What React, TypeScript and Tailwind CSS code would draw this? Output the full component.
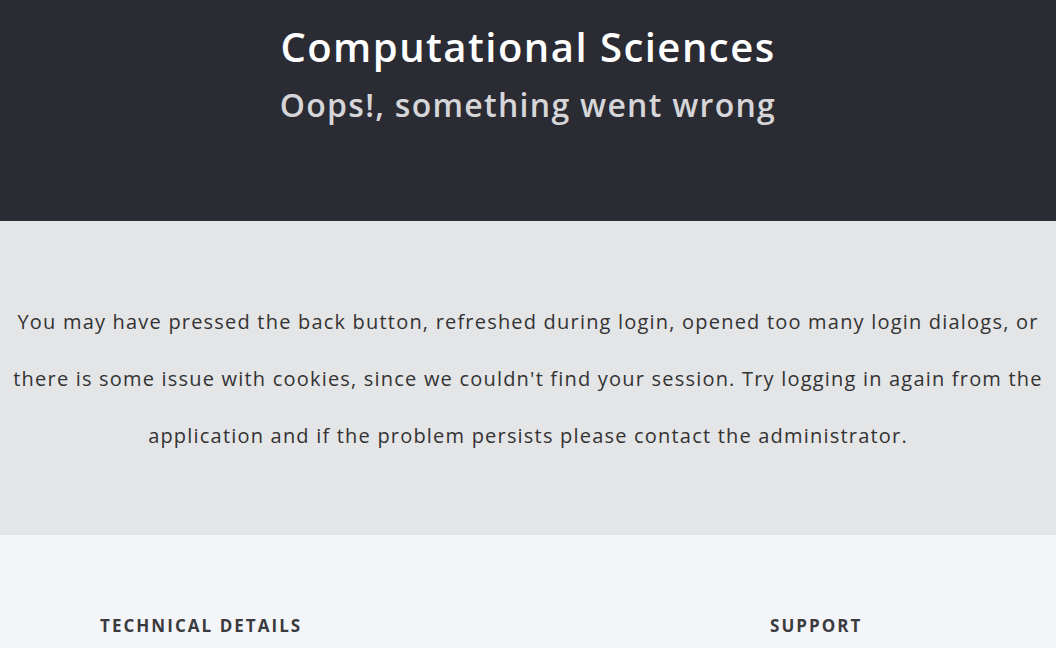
import React from "react";

export default function App() {
  const font = { fontFamily: "'Open Sans', 'Noto Sans', sans-serif" };
  return (
    <div className="w-[1056px] h-[648px] overflow-hidden" style={font}>
      <header className="h-[221px] bg-[#2a2b33] flex flex-col items-center pt-[22px]">
        <h1 className="text-[40px] leading-[50px] font-semibold tracking-[0.037em] text-white">Computational Sciences</h1>
        <h2 className="text-[32px] leading-[46px] font-semibold tracking-[0.04em] text-[#d6d6d9] mt-[10px]">Oops!, something went wrong</h2>
      </header>
      <section className="h-[314px] bg-[#e4e5e7] flex items-center justify-center">
        <p className="text-[20px] leading-[57px] tracking-[0.06em] text-[#333] text-center whitespace-nowrap">
          You may have pressed the back button, refreshed during login, opened too many login dialogs, or
          <br />
          there is some issue with cookies, since we couldn't find your session. Try logging in again from the
          <br />
          application and if the problem persists please contact the administrator.
        </p>
      </section>
      <section className="bg-[#f4f5f8] h-[200px] grid grid-cols-2 pt-[78px]">
        <div className="pl-[100px]">
          <h3 className="text-[17px] font-bold tracking-[0.12em] text-[#3a3a3f]">TECHNICAL DETAILS</h3>
        </div>
        <div className="pl-[242px]">
          <h3 className="text-[17px] font-bold tracking-[0.12em] text-[#3a3a3f]">SUPPORT</h3>
        </div>
      </section>
    </div>
  );
}
